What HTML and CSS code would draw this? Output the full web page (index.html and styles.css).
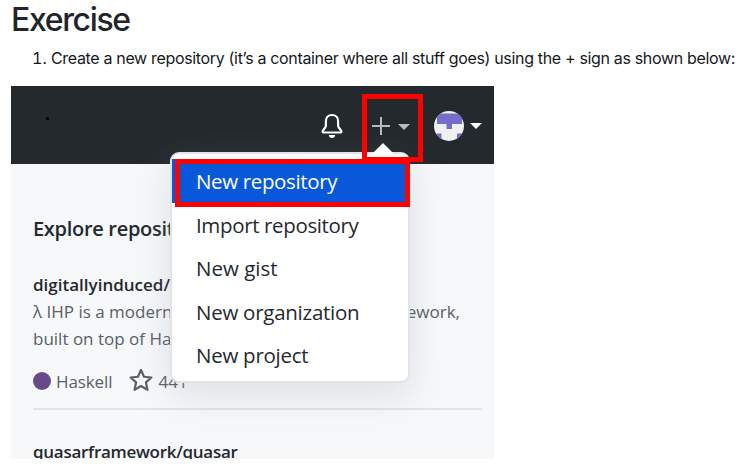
FILE: index.html
```
<!DOCTYPE html>
<html lang="en">
<head>
<meta charset="utf-8">
<title>Exercise</title>
<link rel="stylesheet" href="styles.css">
</head>
<body>
<h1><span>Exercise</span></h1>
<ol><li><span class="step">Create a new repository (it’s a container where all stuff goes) using the + sign as shown below:</span></li></ol>
<section class="shot">
  <header class="bar">
    <span class="speck"></span>
    <svg class="bell" width="24" height="26" viewBox="0 0 24 26"><path d="M12 2C8.200 2 5.900 4.600 5.900 8V12.500Q5.900 13.500 5.200 14.500L2.800 17.800Q2.200 19.500 3.800 19.500H20.200Q21.800 19.500 21.200 17.800L18.800 14.500Q18.100 13.500 18.100 12.500V8C18.100 4.600 15.800 2 12 2Z" fill="none" stroke="#fff" stroke-width="2.200"/><path d="M8.800 22H15.200Q14.800 25 12 25T8.800 22Z" fill="#fff"/></svg>
    <svg class="plus" width="18" height="18" viewBox="0 0 18 18"><path d="M9 0V18M0 9H18" stroke="#b8babc" stroke-width="2"/></svg>
    <i class="caret dim"></i>
    <svg class="avatar" width="30" height="30" viewBox="0 0 30 30"><defs><clipPath id="round"><circle cx="15" cy="15" r="15"/></clipPath></defs><g clip-path="url(#round)"><path fill="#f0f0f0" d="M0 0H30V30H0z"/><path fill="#756dcc" d="M3 2.500H28V13H18V18H12.500V13H3zM3 22.500H7.500V30H3zM23 22.500H28V30H23z"/></g></svg>
    <i class="caret"></i>
  </header>
  <div class="feed">
    <h2><span class="t-explore">Explore repositories</span></h2>
    <h3 class="first"><span>digitallyinduced/ihp</span></h3>
    <p class="desc"><span class="t-desc">λ IHP is a modern</span><span class="tail">framework,</span></p>
    <p class="desc"><span class="t-desc">built on top of Haskell</span></p>
    <div class="meta">
      <i class="dot"></i><span class="lang">Haskell</span>
      <svg class="star" width="24" height="24" viewBox="0 0 22 22"><path d="M11 1.800L13.800 8L20.500 8.700L15.500 13.200L16.900 20L11 16.500L5.100 20L6.500 13.200L1.500 8.700L8.200 8Z" fill="none" stroke="#586069" stroke-width="2" stroke-linejoin="round"/></svg>
      <span class="count">441</span>
    </div>
    <h3 class="next"><span class="t-next">quasarframework/quasar</span></h3>
  </div>
  <nav class="menu">
    <a class="active"><span class="tight">New repository</span></a>
    <a><span class="tight">Import repository</span></a>
    <a><span>New gist</span></a>
    <a><span class="snug">New organization</span></a>
    <a><span class="snug">New project</span></a>
  </nav>
  <i class="mark mark-plus"></i>
  <i class="mark mark-item"></i>
</section>
</body>
</html>
```
FILE: styles.css
```
* { box-sizing: border-box; }
body { margin: 0; width: 748px; height: 469px; overflow: hidden; background: #fff; color: #24292e; font-family: Inter, "Liberation Sans", sans-serif; }
h1, h2, h3, p, ol { margin: 0; }
h1 { padding: 0 0 0 11px; height: 40px; font-size: 32px; line-height: 40px; font-weight: 500; letter-spacing: -1.35px; color: #212529; }
ol { padding: 6px 0 0 51px; height: 46px; font-size: 16px; line-height: 24px; color: #15181c; }
li { white-space: nowrap; }
.step { letter-spacing: -0.335px; }
.shot { position: relative; width: 483px; height: 373px; margin-left: 11px; overflow: hidden; background: #f6f8fa; font-family: "Open Sans", "Noto Sans", sans-serif; }
.bar { display: flex; align-items: center; height: 78px; background: #24292e; }
.speck { width: 3px; height: 3px; margin: -14px 0 0 35px; background: #000; border-radius: 1px; }
.bell { margin: 1px 0 0 271px; }
.plus { margin: 1px 0 0 28px; }
.caret { width: 12px; height: 6px; margin: 2px 0 0 6px; background: #fff; clip-path: polygon(0 0, 100% 0, 50% 100%); }
.dim { margin: 4px 24px 0 8px; background: #b8babc; }
.avatar { margin-top: 2px; }
.feed { padding: 50px 12px 0 22px; white-space: nowrap; }
h2 { font-size: 20px; line-height: 30px; font-weight: 600; }
.t-explore { letter-spacing: -0.3px; }
h3 { height: 27px; margin-top: 26px; font-size: 17px; line-height: 27px; font-weight: 600; }
.first { line-height: 29px; }
.t-next { letter-spacing: -0.28px; }
.desc { position: relative; height: 27px; font-size: 17px; line-height: 29px; color: #586069; }
.tail { position: absolute; right: 22px; top: 0; }
.meta { display: flex; align-items: center; height: 57px; margin-top: 2px; font-size: 17px; border-bottom: 2px solid #e1e4e8; color: #586069; }
.dot { width: 18px; height: 18px; border-radius: 50%; background: #684a8b; }
.lang { margin: 2px 0 0 5px; letter-spacing: -0.1px; }
.star { margin: -1px 0 0 17px; }
.count { margin: 2px 0 0 5px; }
.next { margin-top: 28px; }
.menu { position: absolute; left: 159px; top: 66px; width: 240px; height: 231px; padding-top: 5px; border: 2px solid #e1e4e8; border-radius: 9px; background: #fff; box-shadow: 0 12px 36px rgba(149,157,165,.25); }
.menu::before { content: ""; position: absolute; left: 200px; top: -11px; width: 22px; height: 11px; background: #fff; clip-path: polygon(50% 0, 100% 100%, 0 100%); }
.menu a { display: block; height: 43.4px; padding-left: 24px; font-size: 20.5px; line-height: 45px; white-space: nowrap; }
.menu .active { height: 44px; background: #0a58da; color: #fff; }
.tight { letter-spacing: -0.36px; }
.snug { letter-spacing: -0.26px; }
.mark { position: absolute; border: 5px solid #f00; }
.mark-plus { left: 351px; top: 8px; width: 61px; height: 68px; }
.mark-item { left: 164px; top: 73px; width: 235px; height: 48px; }
```
